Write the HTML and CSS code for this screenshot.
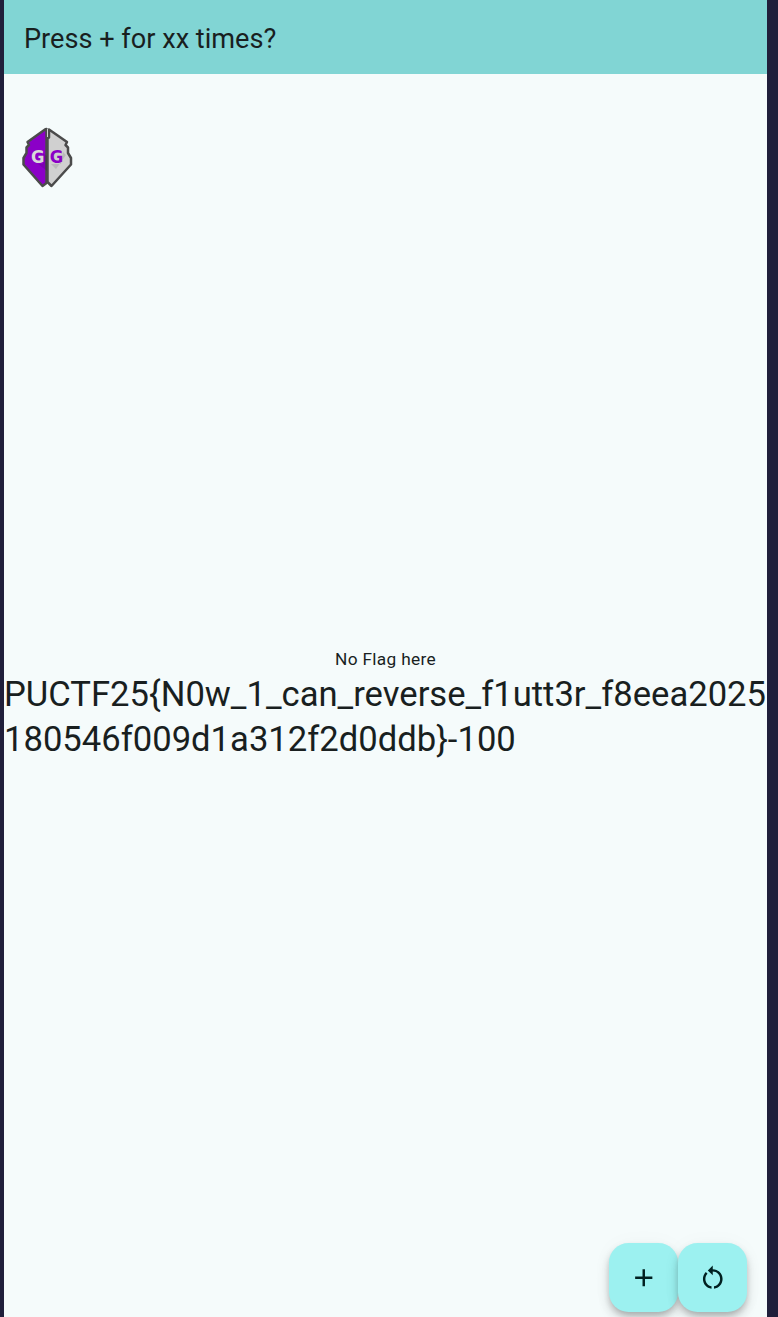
FILE: index.html
```html
<!DOCTYPE html>
<html lang="en">
<head>
<meta charset="utf-8">
<title>Press + for xx times?</title>
<link rel="stylesheet" href="styles.css">
</head>
<body>
<div class="app">
  <header class="app-bar"><h1 class="title">Press + for xx times?</h1></header>
  <main class="content">
    <p class="label">No Flag here</p>
    <p class="flag">PUCTF25{N0w_1_can_reverse_f1utt3r_f8eea2025<wbr>180546f009d1a312f2d0ddb}-100</p>
  </main>
  <svg class="overlay-logo" viewBox="0 0 70 75" aria-label="GG">
    <path class="half-left" d="M34.500 9L33 9.500L15.500 22L17 25L14.500 27.500L14.500 33L11.500 38L11.500 44.500L30.500 66L34.500 63Z"/>
    <path class="half-right" d="M35.500 18L37 17.500L37 9.500L55 22L53.500 25L56 27.500L56 33L59 38L59 44.500L39.500 66L35.500 62Z"/>
    <path class="notch" d="M35.500 9V17"/>
    <path class="shade" d="M31 33L35 36V51L26 44H31Z M51 32L54 35L44 49L39 44H49Z"/>
    <text class="g g-left" x="19" y="43" textLength="13.500" lengthAdjust="spacingAndGlyphs">G</text>
    <text class="g g-right" x="37.700" y="43" textLength="13.500" lengthAdjust="spacingAndGlyphs">G</text>
  </svg>
  <div class="actions">
    <button class="fab" aria-label="Increment"><svg class="icon" viewBox="0 0 24 24"><path d="M19 13h-6v6h-2v-6H5v-2h6V5h2v6h6v2z"/></svg></button>
    <button class="fab" aria-label="Reset"><svg class="icon" viewBox="0 0 24 24"><path d="M12 5V2L8 6l4 4V7c3.310 0 6 2.690 6 6 0 2.970-2.170 5.430-5 5.910v2.020c3.950-.49 7-3.850 7-7.930 0-4.420-3.580-8-8-8zm-6 8c0-1.650.67-3.150 1.760-4.240L6.340 7.340C4.900 8.790 4 10.790 4 13c0 4.080 3.050 7.440 7 7.930v-2.020c-2.830-.48-5-2.940-5-5.910z"/></svg></button>
  </div>
</div>
</body>
</html>
```
FILE: styles.css
```css
body {
  margin: 0;
  background: #201f3b;
  font-family: Roboto, sans-serif;
  color: #191f1f;
}
.app {
  position: relative;
  display: flex;
  flex-direction: column;
  width: 763px;
  height: 1317px;
  margin-left: 4px;
  background: #f5fbfb;
  overflow: hidden;
}
.app-bar {
  display: flex;
  align-items: center;
  box-sizing: border-box;
  height: 74px;
  padding: 3px 20px 0;
  background: #81d5d4;
}
.title {
  margin: 0;
  font-size: 27.150px;
  font-weight: 400;
  line-height: 34px;
}
.content {
  display: flex;
  flex-direction: column;
  align-items: center;
  padding-top: 573px;
}
.label {
  margin: 0;
  padding-bottom: 1px;
  font-size: 17.3px;
  line-height: 24px;
  letter-spacing: 0.320px;
}
.flag {
  margin: 0;
  width: 763px;
  font-size: 34.620px;
  line-height: 45px;
}
.overlay-logo {
  position: absolute;
  left: 8px;
  top: 120px;
  width: 70px;
  height: 75px;
}
.half-left, .half-right {
  stroke: #4b4b4b;
  stroke-width: 2.500;
  stroke-linejoin: round;
}
.half-left { fill: #8b00c7; }
.half-right { fill: #d0d0d0; }
.notch { stroke: #d0d0d0; stroke-width: 1; }
.shade { fill: #000; opacity: 0.1; }
.g {
  font: bold 17px "DejaVu Sans", sans-serif;
}
.g-left { fill: #d8d8d8; }
.g-right { fill: #8b00c7; }
.actions {
  position: absolute;
  right: 20px;
  bottom: 5px;
  display: flex;
}
.fab {
  display: flex;
  align-items: center;
  justify-content: center;
  width: 69px;
  height: 69px;
  padding: 0;
  border: 0;
  border-radius: 19.6px;
  background: #9cf1f0;
  box-shadow: 0 4px 6px -1px rgba(0, 0, 0, 0.2), 0 7px 12px rgba(0, 0, 0, 0.14), 0 1px 22px rgba(0, 0, 0, 0.03);
}
.icon {
  width: 29.500px;
  height: 29.500px;
  fill: #002020;
}
```
